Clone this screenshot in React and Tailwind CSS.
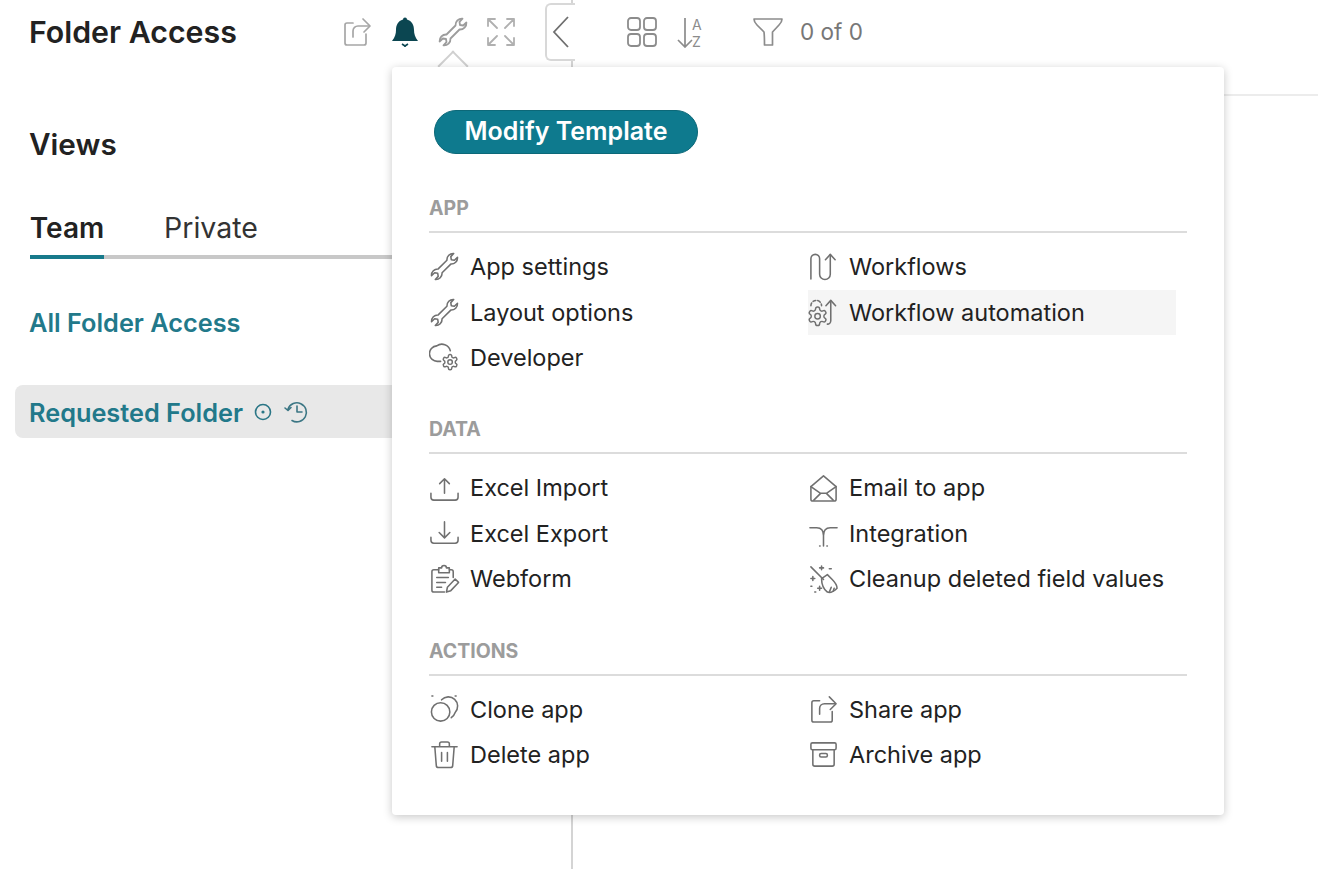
const GEAR =
  "M12.22 2h-.44a2 2 0 0 0-2 2v.18a2 2 0 0 1-1 1.73l-.43.25a2 2 0 0 1-2 0l-.15-.08a2 2 0 0 0-2.73.73l-.22.38a2 2 0 0 0 .73 2.73l.15.1a2 2 0 0 1 1 1.72v.51a2 2 0 0 1-1 1.74l-.15.09a2 2 0 0 0-.73 2.73l.22.38a2 2 0 0 0 2.73.73l.15-.08a2 2 0 0 1 2 0l.43.25a2 2 0 0 1 1 1.73V20a2 2 0 0 0 2 2h.44a2 2 0 0 0 2-2v-.18a2 2 0 0 1 1-1.73l.43-.25a2 2 0 0 1 2 0l.15.08a2 2 0 0 0 2.73-.73l.22-.39a2 2 0 0 0-.73-2.73l-.15-.08a2 2 0 0 1-1-1.74v-.5a2 2 0 0 1 1-1.74l.15-.09a2 2 0 0 0 .73-2.73l-.22-.38a2 2 0 0 0-2.73-.73l-.15.08a2 2 0 0 1-2 0l-.43-.25a2 2 0 0 1-1-1.73V4a2 2 0 0 0-2-2z";

function Gear({ x, y, s = 0.7 }) {
  return (
    <g transform={`translate(${x} ${y}) scale(${s})`} strokeWidth={1.5 / s}>
      <path d={GEAR} />
      <circle cx="12" cy="12" r="3" />
    </g>
  );
}

function Icon({ size = 32, color = "#707070", width = 1.6, className = "", children }) {
  return (
    <svg
      viewBox="0 0 32 32"
      width={size}
      height={size}
      fill="none"
      stroke={color}
      strokeWidth={width}
      strokeLinecap="round"
      strokeLinejoin="round"
      className={`shrink-0 ${className}`}
    >
      {children}
    </svg>
  );
}

const wrench = (
  <path d="M25.5 2.6 L22.5 5.8 L23 9 L26.2 9.5 L29.4 6.5 A6.5 6.5 0 0 1 22.5 13.5 L13.5 22.5 A6.5 6.5 0 0 1 6.5 29.4 L9.5 26.2 L9 23 L5.8 22.5 L2.6 25.5 A6.5 6.5 0 0 1 9.5 18.5 L18.5 9.5 A6.5 6.5 0 0 1 25.5 2.6Z" />
);

const shareArrow = (
  <>
    <path d="M12 7 H6 a2 2 0 0 0 -2 2 V27 a2 2 0 0 0 2 2 H23 a2 2 0 0 0 2 -2 V18" />
    <path d="M12 21 V15 a5 5 0 0 1 5 -5 H28" />
    <path d="M22 3 L29 10 L23 16" />
  </>
);

const icons = {
  wrench,
  developer: (
    <>
      <path d="M12 20 H9 a8 8 0 0 1 -1 -16 a9 9 0 0 1 14 5" />
      <Gear x={12.4} y={11.4} s={0.78} />
    </>
  ),
  workflows: (
    <>
      <path d="M3 29 V8 a4.5 4.5 0 0 1 9 0 V24 a5 5 0 0 0 11 0 V4" />
      <path d="M18 9 L23 3.5 L28 9" />
    </>
  ),
  automation: (
    <>
      <path d="M3 9 a5.5 5.5 0 0 1 11 0" strokeDasharray="3 2" />
      <path d="M20 28 a3.5 3.5 0 0 0 3.5 -3.5 V4" />
      <path d="M18.5 9 L23.5 3.5 L28.5 9" />
      <Gear x={-1.5} y={8.5} s={0.95} />
    </>
  ),
  import: (
    <>
      <path d="M2 21 V25 a3 3 0 0 0 3 3 H27 a3 3 0 0 0 3 -3 V21" />
      <path d="M16 21 V6 M11 11 L16 6 L21 11" />
    </>
  ),
  export: (
    <>
      <path d="M2 20 V23 a3 3 0 0 0 3 3 H27 a3 3 0 0 0 3 -3 V20" />
      <path d="M16 4 V20 M10.5 15 L16 20.5 L21.5 15" />
    </>
  ),
  webform: (
    <>
      <path d="M10 6 H5 a2 2 0 0 0 -2 2 V27 a2 2 0 0 0 2 2 H16 M21 6 H23 a2 2 0 0 1 2 2 V14" />
      <path d="M10 4 H13 a2.5 2.5 0 0 1 5 0 H21 V9 H10Z" />
      <path d="M8 14 H20 M8 19 H17 M8 24 H13" />
      <path d="M18 29 L19 24 L27 15.5 L30.5 19 L22.5 27.5Z" />
    </>
  ),
  email: (
    <>
      <path d="M3 14 V27 a2 2 0 0 0 2 2 H27 a2 2 0 0 0 2 -2 V14 L16 3Z" />
      <path d="M3 14 L13 21 H19 L29 14 M6 28 L13 21 M26 28 L19 21" />
    </>
  ),
  integration: (
    <>
      <path d="M2 10 H9 C14 10 16 13 16 18 V29 M30 10 H23 C18 10 16 13 16 18" />
      <path d="M12 29 L12.5 29 M19.5 29 L20 29" />
    </>
  ),
  cleanup: (
    <>
      <path d="M3 3 L16 16" />
      <path d="M14 15 L20 11 L25 16 C28 19 30 23 30 25 C27 28 23 30 20 29 C16 26 14 20 14 15Z" />
      <path d="M22 29 L24 24 M26 28 L27 25" />
      <path d="M12 4 H16 M14 2 V6 M22 5 H24 M3 15 H7 M5 13 V17 M10 25 H14 M12 23 V27 M3 23 H4 M7 29 H8" />
    </>
  ),
  clone: (
    <>
      <circle cx="12" cy="18.5" r="9.5" />
      <path d="M13 6 a9.5 9.5 0 0 1 14 13 C26 22 25 23 23 24.5" />
      <path d="M3 2 H4 M27 2 H28" strokeDasharray="1 2" />
    </>
  ),
  trash: (
    <>
      <path d="M3 8 H29 M11 8 V5 a2 2 0 0 1 2 -2 H19 a2 2 0 0 1 2 2 V8" />
      <path d="M6 8 L7.5 27 a2.5 2.5 0 0 0 2.5 2.5 H22 a2.5 2.5 0 0 0 2.5 -2.5 L26 8" />
      <path d="M13 14 V23 M19 14 V23" />
    </>
  ),
  share: shareArrow,
  archive: (
    <>
      <rect x="3" y="4" width="26" height="7" rx="1.5" />
      <path d="M5 11 V26 a2 2 0 0 0 2 2 H25 a2 2 0 0 0 2 -2 V11" />
      <rect x="12" y="15" width="8" height="3.5" rx="1.5" />
    </>
  ),
};

const sections = [
  {
    title: "APP",
    left: [
      ["wrench", "App settings"],
      ["wrench", "Layout options"],
      ["developer", "Developer"],
    ],
    right: [
      ["workflows", "Workflows"],
      ["automation", "Workflow automation", true],
    ],
  },
  {
    title: "DATA",
    left: [
      ["import", "Excel Import"],
      ["export", "Excel Export"],
      ["webform", "Webform"],
    ],
    right: [
      ["email", "Email to app"],
      ["integration", "Integration"],
      ["cleanup", "Cleanup deleted field values"],
    ],
  },
  {
    title: "ACTIONS",
    left: [
      ["clone", "Clone app"],
      ["trash", "Delete app"],
    ],
    right: [
      ["share", "Share app"],
      ["archive", "Archive app"],
    ],
  },
];

function MenuRow({ icon, label, active }) {
  return (
    <div className={`flex h-[45.5px] items-center gap-[10px] ${active ? "w-[368px] bg-[#f5f5f5]" : ""}`}>
      <Icon size={31}>{icons[icon]}</Icon>
      <span className="text-[23.5px] text-[#222222]">{label}</span>
    </div>
  );
}

function Section({ title, left, right }) {
  return (
    <div className="mb-[34.75px]">
      <div className="h-[39px] border-b-2 border-[#dcdcdc] pt-[1px] text-[19.5px] leading-[26px] font-bold text-[#9c9c9c]">
        {title}
      </div>
      <div className="mt-[11px] grid grid-cols-[379px_379px]">
        <div>
          {left.map(([icon, label]) => (
            <MenuRow key={label} icon={icon} label={label} />
          ))}
        </div>
        <div>
          {right.map(([icon, label, active]) => (
            <MenuRow key={label} icon={icon} label={label} active={active} />
          ))}
        </div>
      </div>
    </div>
  );
}

export default function App() {
  return (
    <div className="relative flex h-[869px] overflow-hidden bg-white font-['Inter','Liberation_Sans',sans-serif]">
      {/* Left column */}
      <div className="w-[573px] shrink-0 border-r-2 border-[#d4d4d4]">
        <div className="flex h-[64px] items-center pl-[29px]">
          <div className="w-[312px] pt-[1px] text-[30.3px] font-semibold text-[#222222]">Folder Access</div>
          <div className="flex items-center gap-[16px]">
            <Icon size={32} color="#a6a6a6" width={1.7}>{shareArrow}</Icon>
            <svg viewBox="0 0 32 32" width="32" height="32" className="shrink-0">
              <path
                d="M16 1.5 a2 2 0 0 1 2 2 C23 5 25 9 25 14 C25 18 26 21 29 25 H3 C6 21 7 18 7 14 C7 9 9 5 14 3.5 a2 2 0 0 1 2 -2Z"
                fill="#0b4651"
              />
              <path d="M13 28 L16 30 L19 28 M16 30 V31" stroke="#0b4651" strokeWidth="1.6" fill="none" />
            </svg>
            <Icon size={32} color="#9c9c9c" width={1.8}>{wrench}</Icon>
            <Icon size={32} color="#b0b0b0" width={1.8}>
              <path d="M3 10 V3 H10 M3 3 L12 12 M22 3 H29 V10 M29 3 L20 12 M3 22 V29 H10 M3 29 L12 20 M22 29 H29 V22 M29 29 L20 20" />
            </Icon>
          </div>
        </div>

        <div className="pt-[58px] pl-[29px] text-[29.7px] leading-[44px] font-semibold text-[#222222]">Views</div>

        {/* Tabs */}
        <div className="mt-[39px] ml-[30px] flex h-[54px] w-[362px] items-start border-b-[4px] border-[#c8c8c8] text-[28px]">
          <div className="-mb-[4px] flex h-[54px] w-[74px] items-center justify-center border-b-[4px] border-[#187a8b] pb-[5px] font-semibold text-[#222222]">
            Team
          </div>
          <div className="ml-[60px] flex h-[50px] items-center pb-[3px] text-[28.5px] text-[#333333]">Private</div>
        </div>

        <div className="mt-[46px] pl-[29px] text-[25.3px] leading-[36px] font-semibold text-[#22798a]">All Folder Access</div>

        <div className="mt-[44px] ml-[15px] flex h-[53px] w-[377px] items-center gap-[10px] rounded-l-lg bg-[#e8e8e8] pl-[14px]">
          <span className="pt-[2px] text-[25.3px] font-semibold text-[#22798a]">Requested Folder</span>
          <svg viewBox="0 0 20 20" width="20" height="20" fill="none" stroke="#2a7686" strokeWidth="1.6">
            <circle cx="10" cy="10" r="7.5" />
            <circle cx="10" cy="10" r="1.6" fill="#2a7686" stroke="none" />
          </svg>
          <svg viewBox="0 0 26 26" width="26" height="26" fill="none" stroke="#3b7684" strokeWidth="1.6" strokeLinecap="round" strokeLinejoin="round">
            <path d="M5 10 a9.5 9.5 0 1 1 4 11.5" />
            <path d="M2 9 L5 11.5 L8 8.5" />
            <path d="M14 7 V13 H19" />
          </svg>
        </div>
      </div>

      {/* Right column toolbar */}
      <div className="flex h-[96px] flex-1 items-start border-b-2 border-[#ececec] pt-[16px] pl-[53px]">
        <Icon size={32} color="#8c8c8c" width={1.8}>
          <rect x="2" y="2" width="12" height="12" rx="3" />
          <rect x="18" y="2" width="12" height="12" rx="3" />
          <rect x="2" y="18" width="12" height="12" rx="3" />
          <rect x="18" y="18" width="12" height="12" rx="3" />
        </Icon>
        <div className="ml-[16px] flex w-[32px] shrink-0">
          <svg viewBox="0 0 20 32" width="20" height="32" className="shrink-0">
            <path d="M11 2 V31 M4 24 L11 31 L18 24" stroke="#8c8c8c" strokeWidth="1.7" fill="none" />
          </svg>
          <div className="-ml-[2px] flex flex-col text-[14px] leading-[17px] text-[#8c8c8c]">
            <span>A</span>
            <span>Z</span>
          </div>
        </div>
        <Icon size={32} color="#8c8c8c" width={1.7} className="ml-[46px]">
          <path d="M2 3 H30 C30 6 29 7 27 9 L20.5 16 V29 H12.5 C12.5 24 12.5 20 12 16 L5 9 C3 7 2 6 2 3Z" />
        </Icon>
        <span className="ml-[16px] text-[22.5px] leading-[32px] text-[#777777]">0 of 0</span>
      </div>

      {/* Collapse handle on the divider */}
      <div className="absolute top-[3px] left-[545px] flex h-[58px] w-[30px] items-center rounded-l-md border-y-2 border-l-2 border-[#d8d8d8] bg-white pl-[5px]">
        <svg viewBox="0 0 18 32" width="18" height="32" fill="none" stroke="#6f6f6f" strokeWidth="1.8">
          <path d="M16 1 L2 16 L16 31" />
        </svg>
      </div>

      {/* Popover arrow */}
      <div className="absolute top-[55px] left-[442px] size-[22px] rotate-45 border-t-2 border-l-2 border-[#d0d0d0] bg-white" />

      {/* Tools popover */}
      <div className="absolute top-[67px] left-[392px] h-[748px] w-[832px] rounded-sm bg-white pt-[43px] pl-[37px] shadow-[0_2px_10px_rgba(0,0,0,0.22)]">
        <button className="ml-[5px] flex h-[44px] w-[264px] items-center justify-center rounded-full border border-[#0c6878] bg-[#0e7a8e] text-[25px] font-semibold text-white">
          Modify Template
        </button>
        <div className="mt-[40px] w-[758px]">
          {sections.map((s) => (
            <Section key={s.title} {...s} />
          ))}
        </div>
      </div>
    </div>
  );
}
